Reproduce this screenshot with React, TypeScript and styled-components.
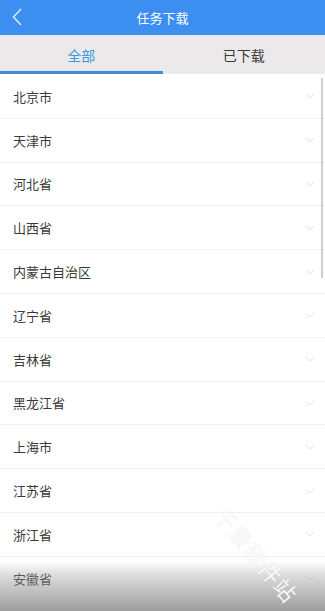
import * as React from "react";
import styled, { createGlobalStyle } from "styled-components";

const GlobalStyle = createGlobalStyle`
  html, body {
    margin: 0;
    padding: 0;
    background: #ffffff;
  }
  body {
    font-family: "Noto Sans CJK SC", "Noto Sans", sans-serif;
  }
`;

const Screen = styled.div`
  position: relative;
  width: 325px;
  height: 611px;
  overflow: hidden;
  background: #ffffff;
  display: flex;
  flex-direction: column;
`;

const Header = styled.div`
  height: 35px;
  flex-shrink: 0;
  background: #3d8ef1;
  display: flex;
  align-items: center;
  justify-content: center;
  position: relative;
  color: #ffffff;
  font-size: 13px;
`;

const BackButton = styled.div`
  position: absolute;
  left: 12px;
  top: 7px;
  width: 14px;
  height: 20px;
  display: flex;
  align-items: center;
`;

const Tabs = styled.div`
  height: 39px;
  flex-shrink: 0;
  background: #ebe9ea;
  display: flex;
`;

const Tab = styled.div<{ $active?: boolean }>`
  flex: 1;
  display: flex;
  align-items: center;
  justify-content: center;
  font-size: 14px;
  color: ${(p) => (p.$active ? "#3a9ae2" : "#3a3a3a")};
  border-bottom: 3px solid ${(p) => (p.$active ? "#3a8fd6" : "transparent")};
  box-sizing: border-box;
  padding-top: 3px;
`;

const List = styled.div`
  flex: 1;
  display: flex;
  flex-direction: column;
  padding-top: 1px;
`;

const Row = styled.div`
  height: 43.8px;
  flex-shrink: 0;
  box-sizing: border-box;
  border-bottom: 1px solid #f0f0f0;
  display: flex;
  align-items: center;
  justify-content: space-between;
  padding: 0 10px 0 13px;
  font-size: 13px;
  color: #3a3a3a;
`;

const Scrollbar = styled.div`
  position: absolute;
  right: 2px;
  top: 78px;
  width: 2px;
  height: 200px;
  background: #cfcfcf;
`;

const BottomShade = styled.div`
  position: absolute;
  left: 0;
  right: 0;
  bottom: 0;
  height: 50px;
  background: linear-gradient(
    to bottom,
    rgba(150, 150, 150, 0) 0%,
    rgba(150, 150, 150, 0.35) 30%,
    rgba(140, 140, 140, 0.85) 100%
  );
  pointer-events: none;
`;

const Watermark = styled.div`
  position: absolute;
  left: 220px;
  top: 494px;
  font-size: 22px;
  letter-spacing: 1px;
  color: rgba(255, 255, 255, 0.9);
  text-shadow: 0 0 1px rgba(190, 190, 190, 0.5);
  transform: rotate(50deg);
  transform-origin: left center;
  white-space: nowrap;
  pointer-events: none;
`;

const Chevron = () => (
  <svg width="10" height="6" viewBox="0 0 10 6">
    <path d="M1 1 L5 5 L9 1" fill="none" stroke="#e4e4e4" strokeWidth="1" />
  </svg>
);

const provinces = [
  "北京市",
  "天津市",
  "河北省",
  "山西省",
  "内蒙古自治区",
  "辽宁省",
  "吉林省",
  "黑龙江省",
  "上海市",
  "江苏省",
  "浙江省",
  "安徽省",
];

const App: React.FC = () => {
  return (
    <Screen>
      <GlobalStyle />
      <Header>
        <BackButton>
          <svg width="10" height="18" viewBox="0 0 10 18">
            <path d="M9 1 L1.5 9 L9 17" fill="none" stroke="#dfeafe" strokeWidth="1.5" />
          </svg>
        </BackButton>
        任务下载
      </Header>
      <Tabs>
        <Tab $active>全部</Tab>
        <Tab>已下载</Tab>
      </Tabs>
      <List>
        {provinces.map((name) => (
          <Row key={name}>
            <span>{name}</span>
            <Chevron />
          </Row>
        ))}
      </List>
      <Scrollbar />
      <BottomShade />
      <Watermark>千景软件站</Watermark>
    </Screen>
  );
};

export default App;
